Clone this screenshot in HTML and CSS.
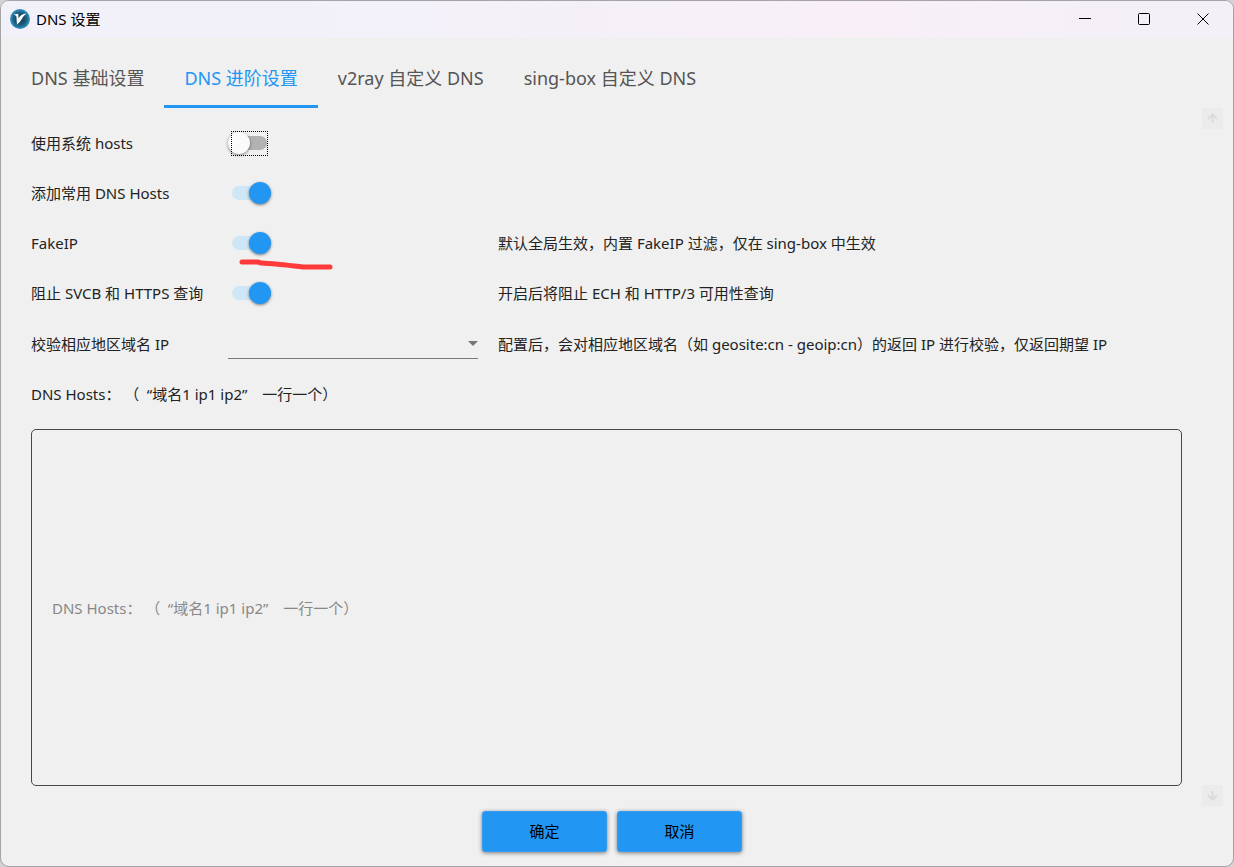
FILE: index.html
```
<!DOCTYPE html>
<html lang="zh-CN">
<head>
    <meta charset="UTF-8">
    <meta name="viewport" content="width=device-width, initial-scale=1.0">
    <title>DNS 设置</title>
    <link rel="stylesheet" href="styles.css">
</head>
<body>
    <div class="window">
        <header class="titlebar">
            <svg class="logo" viewBox="0 0 20 20" aria-hidden="true">
                <defs>
                    <radialGradient id="logo-bg">
                        <stop offset="0" stop-color="#123c55"/>
                        <stop offset="0.6" stop-color="#1b5878"/>
                        <stop offset="1" stop-color="#3097c8"/>
                    </radialGradient>
                </defs>
                <circle cx="10" cy="10" r="10" fill="url(#logo-bg)"/>
                <path d="M3.6 5.4L8.2 4.8L8.6 9.6Q10.5 5.2 16.4 4.6Q13.2 7 11.6 10.2Q9.8 13.6 7 15.8L6.4 7.2Q5.4 6 3.6 5.4Z" fill="#fff"/>
            </svg>
            <h1>DNS 设置</h1>
            <div class="window-buttons">
                <button type="button" aria-label="最小化">
                    <svg viewBox="0 0 12 12"><path d="M0 5.5H12"/></svg>
                </button>
                <button type="button" aria-label="最大化">
                    <svg viewBox="0 0 12 12"><rect x="0.5" y="0.5" width="11" height="11" rx="1"/></svg>
                </button>
                <button type="button" aria-label="关闭">
                    <svg viewBox="0 0 12 12"><path d="M0.5 0.5L11.5 11.5M11.5 0.5L0.5 11.5"/></svg>
                </button>
            </div>
        </header>

        <nav class="tabs">
            <a href="#basic">DNS 基础设置</a>
            <a href="#advanced" class="active">DNS 进阶设置</a>
            <a href="#v2ray">v2ray 自定义 DNS</a>
            <a href="#singbox">sing-box 自定义 DNS</a>
        </nav>

        <div class="content">
            <main class="panel">
                <div class="row">
                    <label for="system-hosts">使用系统 hosts</label>
                    <div class="control">
                        <input type="checkbox" class="switch focused" id="system-hosts">
                    </div>
                </div>
                <div class="row">
                    <label for="common-hosts">添加常用 DNS Hosts</label>
                    <div class="control">
                        <input type="checkbox" class="switch" id="common-hosts" checked>
                    </div>
                </div>
                <div class="row">
                    <label for="fakeip">FakeIP</label>
                    <div class="control">
                        <input type="checkbox" class="switch" id="fakeip" checked>
                        <svg class="marker" viewBox="0 0 96 16" aria-hidden="true">
                            <path d="M4 6H20C24 8 32 7 38 8C48 9 56 10 65 11H92"/>
                        </svg>
                    </div>
                    <p>默认全局生效，内置 FakeIP 过滤，仅在 sing-box 中生效</p>
                </div>
                <div class="row">
                    <label for="block-query">阻止 SVCB 和 HTTPS 查询</label>
                    <div class="control">
                        <input type="checkbox" class="switch" id="block-query" checked>
                    </div>
                    <p>开启后将阻止 ECH 和 HTTP/3 可用性查询</p>
                </div>
                <div class="row select-row">
                    <label for="region">校验相应地区域名 IP</label>
                    <div class="control select">
                        <select id="region">
                            <option value=""></option>
                        </select>
                    </div>
                    <p>配置后，会对相应地区域名（如 geosite:cn - geoip:cn）的返回 IP 进行校验，仅返回期望 IP</p>
                </div>

                <label class="hosts-label" for="hosts">DNS Hosts： （&ensp;“域名1 ip1 ip2”&emsp;一行一个）</label>
                <div class="hosts-box">
                    <textarea id="hosts" rows="1" placeholder="DNS Hosts： （&ensp;“域名1 ip1 ip2”&emsp;一行一个）"></textarea>
                </div>
            </main>

            <div class="scroller">
                <button type="button" aria-label="向上滚动">
                    <svg viewBox="0 0 12 12"><path d="M6 11V2M1 6.5L6 1.5L11 6.5"/></svg>
                </button>
                <button type="button" aria-label="向下滚动">
                    <svg viewBox="0 0 12 12"><path d="M6 1V10M1 5.5L6 10.5L11 5.5"/></svg>
                </button>
            </div>
        </div>

        <footer class="actions">
            <button type="button">确定</button>
            <button type="button">取消</button>
        </footer>
    </div>
</body>
</html>
```
FILE: styles.css
```
* {
    box-sizing: border-box;
}

body {
    margin: 0;
    background-color: #d2d2d4;
    color: #222;
    font-family: "Noto Sans", "Noto Sans CJK SC", sans-serif;
    font-size: 15px;
    line-height: 20px;
    text-spacing-trim: space-all;
}

button,
select,
textarea {
    font: inherit;
    color: inherit;
    text-spacing-trim: inherit;
}

p {
    margin: 0;
}

.window {
    display: flex;
    flex-direction: column;
    min-height: 100vh;
    overflow: hidden;
    background-color: #f0f0f0;
    border: 1px solid #a4a4a6;
    border-radius: 9px;
}

/* title bar */
.titlebar {
    display: flex;
    align-items: center;
    height: 37px;
    padding: 0 1px 2px 9px;
    background: linear-gradient(to right, #f2f1f9 25%, #f8eff7 70%, #f3f0f8);
    color: #000;
}

.logo {
    width: 20px;
    height: 20px;
    margin-right: 6px;
}

.titlebar h1 {
    margin: 0;
    font-size: 15px;
    font-weight: normal;
}

.window-buttons {
    display: flex;
    margin-left: auto;
}

.window-buttons button {
    display: flex;
    align-items: center;
    justify-content: center;
    width: 59px;
    height: 34px;
    padding: 0;
    border: 0;
    background: none;
}

.window-buttons svg {
    width: 12px;
    height: 12px;
    fill: none;
    stroke: #000;
}

/* tabs */
.tabs {
    display: flex;
    height: 70px;
    padding-left: 10px;
}

.tabs a {
    padding: 28px 20px 0;
    border-bottom: 3px solid transparent;
    color: #555;
    font-size: 18px;
    line-height: 24px;
    text-decoration: none;
    white-space: nowrap;
}

.tabs .active {
    color: #2196f3;
    border-color: #2196f3;
}

/* settings */
.content {
    display: flex;
    flex: 1;
    padding-right: 10px;
}

.panel {
    display: flex;
    flex: 1;
    flex-direction: column;
    padding: 10px 20px 20px 30px;
}

.row {
    display: grid;
    grid-template-columns: 197px 250px 1fr;
    align-items: center;
    min-height: 50px;
}

.select-row {
    min-height: 52px;
}

.row p {
    padding-left: 20px;
}

.control {
    position: relative;
    display: flex;
    align-items: center;
}

.switch {
    position: relative;
    appearance: none;
    width: 35px;
    height: 14px;
    margin: 0 4px;
    border-radius: 7px;
    background-color: #b2b2b2;
}

.switch::before {
    content: "";
    position: absolute;
    top: -4px;
    left: -4px;
    width: 22px;
    height: 22px;
    border-radius: 50%;
    background-color: #fafafa;
    box-shadow: 0 1px 3px rgba(0, 0, 0, 0.5);
}

.switch:checked {
    background-color: #cee6f5;
}

.switch:checked::before {
    left: 17px;
    background-color: #2196f3;
}

.switch.focused::after {
    content: "";
    position: absolute;
    inset: -5px -1px -6px -1px;
    border: 1px dotted #000;
}

.marker {
    position: absolute;
    top: 20px;
    left: 10px;
    width: 96px;
    height: 16px;
    fill: none;
    stroke: #ff3a3a;
    stroke-width: 5;
    stroke-linecap: round;
}

.select select {
    appearance: none;
    width: 100%;
    height: 30px;
    padding: 0 20px 0 0;
    border: 0;
    border-bottom: 1px solid #7a7a7a;
    border-radius: 0;
    background: none;
}

.select::after {
    content: "";
    position: absolute;
    right: 0;
    top: 12px;
    border: 5px solid transparent;
    border-top-color: #757575;
    border-bottom: 0;
    pointer-events: none;
}

.hosts-label {
    padding: 14px 0 25px;
}

.hosts-box {
    display: flex;
    flex: 1;
    align-items: center;
    padding: 0 20px;
    border: 1px solid #484848;
    border-radius: 5px;
}

.hosts-box textarea {
    width: 100%;
    padding: 0;
    border: 0;
    outline: 0;
    background: none;
    resize: none;
    overflow: hidden;
}

.hosts-box textarea::placeholder {
    color: #888;
    opacity: 1;
}

.scroller {
    display: flex;
    flex-direction: column;
    justify-content: space-between;
}

.scroller button {
    display: flex;
    align-items: center;
    justify-content: center;
    width: 21px;
    height: 21px;
    padding: 0;
    border: 0;
    background-color: #ebebeb;
}

.scroller svg {
    width: 11px;
    height: 11px;
    fill: none;
    stroke: #dadada;
    stroke-width: 2;
}

/* bottom buttons */
.actions {
    display: flex;
    justify-content: center;
    gap: 10px;
    padding: 5px 20px 14px 10px;
}

.actions button {
    width: 125px;
    height: 41px;
    padding: 0 0 2px;
    border: 1px solid #3a9cee;
    border-radius: 3px;
    background-color: #2196f3;
    color: #000;
    box-shadow: 0 1px 4px rgba(0, 0, 0, 0.5);
}
```
